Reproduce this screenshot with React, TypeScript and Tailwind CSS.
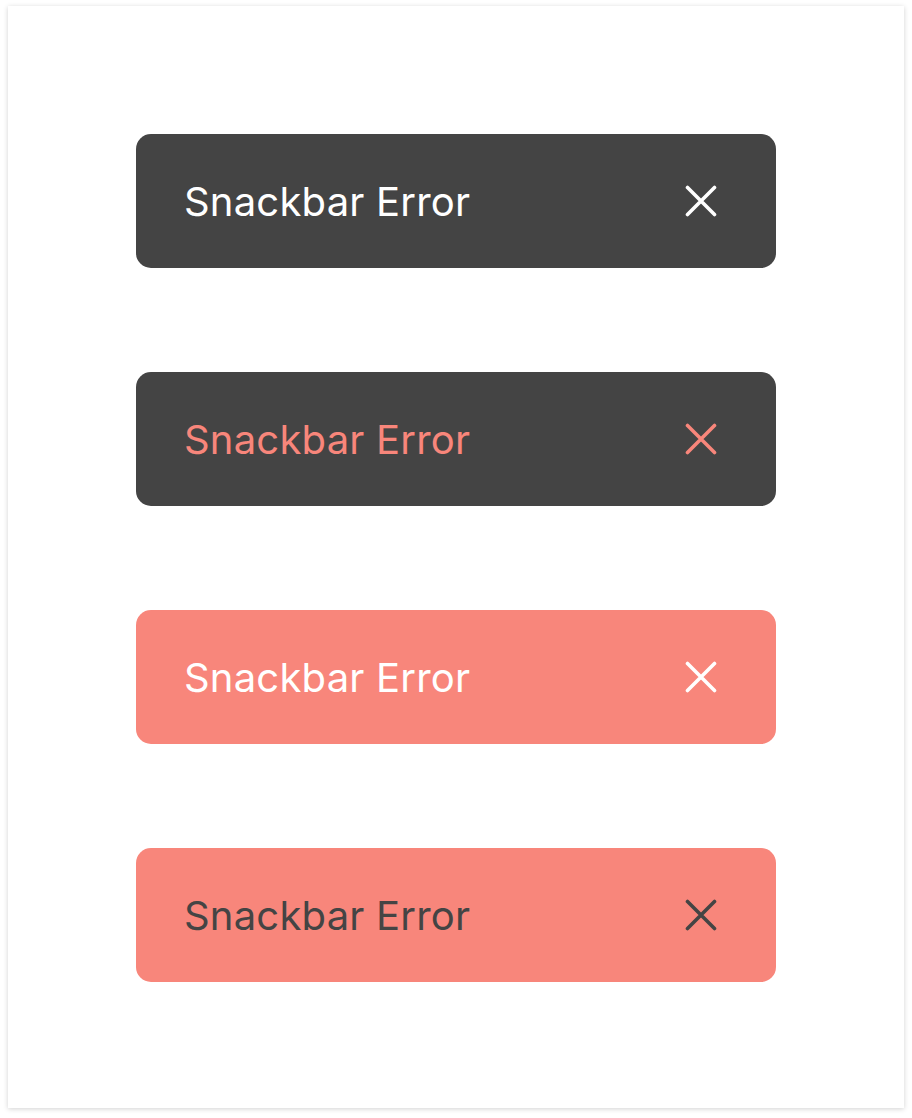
type Variant = { bg: string; fg: string };

const variants: Variant[] = [
  { bg: "bg-[#444444]", fg: "text-white" },
  { bg: "bg-[#444444]", fg: "text-[#f8867b]" },
  { bg: "bg-[#f8867b]", fg: "text-white" },
  { bg: "bg-[#f8867b]", fg: "text-[#444444]" },
];

function CloseIcon() {
  return (
    <svg width="32" height="32" viewBox="0 0 32 32" fill="none" stroke="currentColor" strokeWidth={3.6} strokeLinecap="round">
      <path d="M2.5 2.5L29.5 29.5M29.5 2.5L2.5 29.5" />
    </svg>
  );
}

function Snackbar({ bg, fg }: Variant) {
  return (
    <div className={`${bg} ${fg} h-[134px] w-[640px] rounded-[15px] flex items-center justify-between pl-[48px] pr-[59px]`}>
      <span className="text-[40px] leading-none tracking-[0.2px] pt-[2px]">Snackbar Error</span>
      <CloseIcon />
    </div>
  );
}

export default function App() {
  return (
    <div className="min-h-screen bg-white pt-[6px] pl-[8px]" style={{ fontFamily: "Inter, 'Noto Sans', sans-serif" }}>
      <div className="w-[896px] h-[1102px] bg-white shadow-[0_1px_5px_rgba(0,0,0,0.18)] flex flex-col items-center gap-[104px] pt-[128px]">
        {variants.map((v, i) => (
          <Snackbar key={i} {...v} />
        ))}
      </div>
    </div>
  );
}
